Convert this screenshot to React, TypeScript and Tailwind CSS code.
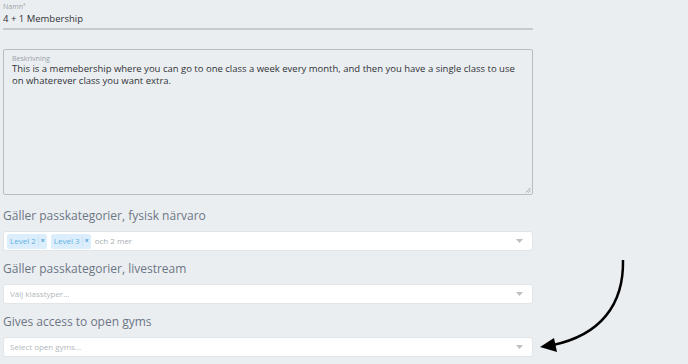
import React from "react";

const font = { fontFamily: '"Open Sans", "DejaVu Sans", sans-serif' };

function Caret() {
  return (
    <svg width="7" height="4" viewBox="0 0 7 4" className="mr-[9px]">
      <path d="M0 0 L7 0 L3.5 4 Z" fill="#bcc0c4" />
    </svg>
  );
}

function Chip({ label }: { label: string }) {
  return (
    <span className="flex h-[15px] items-center rounded-[2px] bg-[#dcedfb] text-[8px] text-[#5fb0e6]">
      <span className="pl-[3px] pr-[2px]">{label}</span>
      <span className="border-l border-[#c9e2f5] px-[2px] text-[7px] font-bold text-[#4a9fd8]">×</span>
    </span>
  );
}

function Select({ children }: { children: React.ReactNode }) {
  return (
    <div className="flex h-[20px] items-center justify-between rounded-[3px] border border-[#e2e5e8] bg-white pl-[3px]">
      <div className="flex items-center gap-[4px]">{children}</div>
      <Caret />
    </div>
  );
}

function Heading({ first, children }: { first?: boolean; children: React.ReactNode }) {
  return (
    <h2
      className={
        first
          ? "mt-[13px] mb-[7px] h-[16px] text-[12px] leading-[16px] text-[#6b7785]"
          : "mt-[10px] mb-[7px] h-[16px] text-[12px] leading-[16px] text-[#6b7785]"
      }
    >
      {children}
    </h2>
  );
}

export default function App() {
  return (
    <div className="relative h-[364px] w-[688px] overflow-hidden bg-[#ebeef1]" style={font}>
      <div className="w-[533px] pl-[3px] pt-[2px]">
        <div className="border-b-2 border-[#c6cbcf] pb-[2px]">
          <div className="h-[10px] text-[7px] leading-[10px] text-[#9aa1a8]">
            Namn<sup className="text-[5px]">*</sup>
          </div>
          <div className="h-[14px] text-[9.5px] leading-[14px] text-[#2f3338]">4 + 1 Membership</div>
        </div>

        <div className="relative mt-[19px] h-[146px] rounded-[2px] border border-[#b9bdc1] px-[8px] pt-[4px]">
          <div className="h-[9px] text-[7px] leading-[9px] text-[#9aa1a8]">Beskrivning</div>
          <p className="text-[9.5px] leading-[12px] text-[#2f3338]">
            This is a memebership where you can go to one class a week every month, and then you have a single class to use on whaterever class you want extra.
          </p>
          <svg width="6" height="6" viewBox="0 0 6 6" className="absolute right-[1px] bottom-[1px]">
            <path d="M1 5.5 L5.5 1 M3.5 5.5 L5.5 3.5" stroke="#8e9397" strokeWidth="0.8" />
          </svg>
        </div>

        <Heading first>Gäller passkategorier, fysisk närvaro</Heading>
        <Select>
          <Chip label="Level 2" />
          <Chip label="Level 3" />
          <span className="text-[8px] text-[#a9aeb3]">och 2 mer</span>
        </Select>

        <Heading>Gäller passkategorier, livestream</Heading>
        <Select>
          <span className="pl-[3px] text-[8px] text-[#b3b8bc]">Välj klasstyper...</span>
        </Select>

        <Heading>Gives access to open gyms</Heading>
        <Select>
          <span className="pl-[3px] text-[8px] text-[#b3b8bc]">Select open gyms...</span>
        </Select>
      </div>

      <svg width="688" height="364" className="pointer-events-none absolute left-0 top-0">
        <path d="M623 260 C624 305 600 335 553 345" fill="none" stroke="#000" strokeWidth="2.5" />
        <path d="M540 347 L554 338 L557 352 Z" fill="#000" />
      </svg>
    </div>
  );
}
